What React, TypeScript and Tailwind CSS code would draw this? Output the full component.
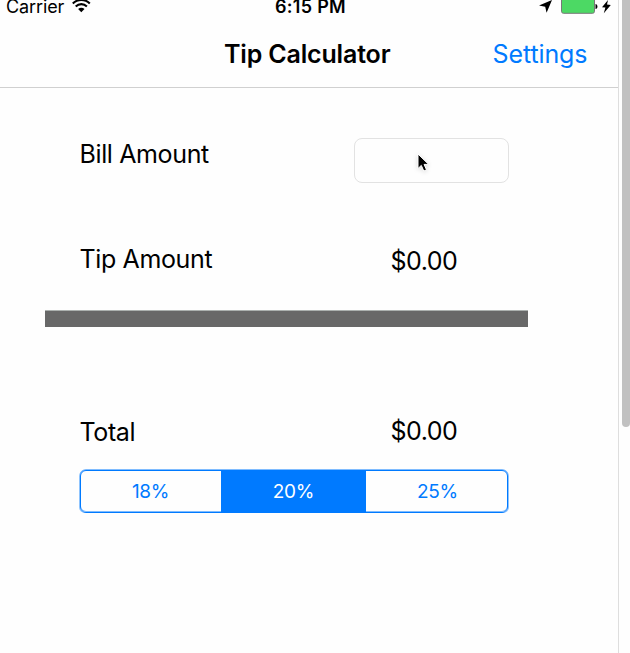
const segments = [
  { label: '18%', cell: 'w-[141px] text-[#007aff]' },
  { label: '20%', cell: 'w-[145px] bg-[#007aff] text-white' },
  { label: '25%', cell: 'w-[142px] pl-px text-[#007aff]' },
];

function StatusBar() {
  return (
    <div className="relative flex h-[14px] justify-center text-[18px] leading-[14px]">
      <div className="absolute left-[6px] top-0 flex">
        <span className="tracking-[-0.1px]">Carrier</span>
        <svg className="absolute left-[66px] top-0" width="20" height="14" viewBox="0 0 20 14" fill="none" stroke="#000" strokeWidth="2.1">
          <path d="M.8 3.5C5.7-1.3 13-1.3 17.8 3.5M3.7 6.4c3.3-3.1 8-3.1 11.2 0" />
          <path d="M6.1 9.1c2-1.8 4.5-1.8 6.4 0L9.3 12.3Z" fill="#000" stroke="none" />
        </svg>
      </div>
      <span className="ml-[3px] font-semibold tracking-[0.3px]">6:15 PM</span>
      <svg className="absolute left-[538px] top-0" width="74" height="14" viewBox="0 0 74 14">
        <path d="M14 0 8.6 12.8 7.2 6.8 1 5.5Z" />
        <rect x="23.5" y="-4" width="33" height="17.3" rx="2" fill="#4cd964" stroke="#777" />
        <path d="M57.5 4c2.6.3 2.6 4.8 0 5Z" />
        <path d="M70 0 64 7.2 67.4 7.6 65.8 13.2 72.8 5.1 69 4.6Z" />
      </svg>
    </div>
  );
}

export default function App() {
  return (
    <div className="flex h-[653px] w-[630px] overflow-hidden bg-[#fefefe] font-['Inter',sans-serif] text-black">
      <main className="w-[619px] shrink-0 border-r border-[#dedede]">
        <header className="h-[88px] border-b border-[#d0d0d0]">
          <StatusBar />
          <div className="flex h-[73px] items-start pt-[24px] text-[25px] leading-[32px]">
            <h1 className="ml-[224px] w-[268.5px] whitespace-nowrap font-semibold tracking-[-0.17px]">Tip Calculator</h1>
            <button className="whitespace-nowrap text-left leading-[32px] tracking-[-0.1px] text-[#007aff]">Settings</button>
          </div>
        </header>
        <section className="flex h-[222px] flex-col pt-[50px] text-[25px] leading-[32px] tracking-[-0.37px]">
          <div className="flex h-[105px]">
            <label className="ml-[79.5px] w-[274.5px]">Bill Amount</label>
            <div className="h-[45px] w-[155px] rounded-[8px] border border-[#e2e2e2] pl-[62px] pt-[14px]">
              <svg width="14" height="20" viewBox="0 0 14 20" className="drop-shadow-sm">
                <path d="M1 1V15.5L4.3 12.4 6.8 18 9.5 16.8 7.1 11.4H11.7Z" fill="#000" stroke="#fff" strokeWidth="1" />
              </svg>
            </div>
          </div>
          <div className="flex">
            <span className="ml-[79.5px] w-[311px]">Tip Amount</span>
            <span className="pt-[1.5px] tracking-[-0.5px]">$0.00</span>
          </div>
        </section>
        <div className="ml-[45px] h-[17px] w-[483px] border-t border-[#acb1af] bg-[#686868]" />
        <section className="pt-[87px] text-[25px] leading-[32px] tracking-[-0.37px]">
          <div className="flex h-[56px]">
            <span className="ml-[79.5px] w-[311px] pt-[2px]">Total</span>
            <span className="pt-[1px] tracking-[-0.5px]">$0.00</span>
          </div>
          <div className="relative ml-[80px] h-[43px] w-[428px]">
            <div className="flex h-full overflow-hidden rounded-[6px]">
              {segments.map((s) => (
                <button key={s.label} className={`h-full text-[19px] tracking-[-0.3px] ${s.cell}`}>{s.label}</button>
              ))}
            </div>
            <div className="pointer-events-none absolute inset-0 rounded-[6px] border border-[#007aff] shadow-[0_-1px_0_#007aff80,-1px_0_0_#007aff70,1px_0_0_#007aff70,inset_0_-1px_0_#007aff80]" />
          </div>
        </section>
      </main>
      <div className="ml-[3px] h-[427px] w-[8px] rounded-b-[4px] bg-[#c1c1c1]" />
    </div>
  );
}
